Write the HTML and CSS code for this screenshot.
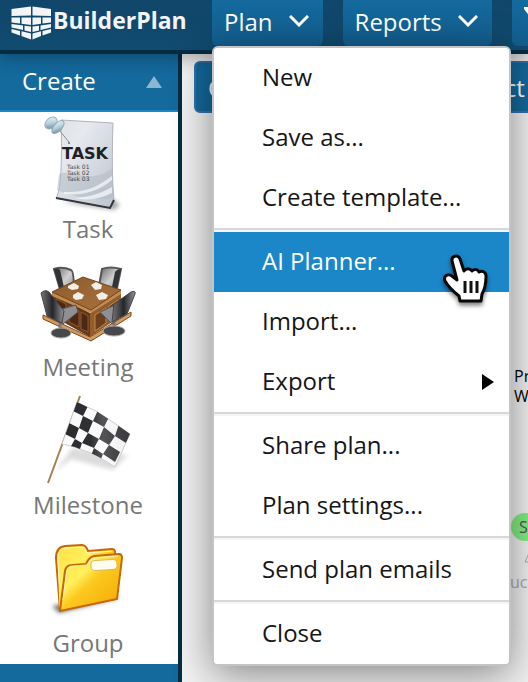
FILE: index.html
```html
<!DOCTYPE html>
<html lang="en">
<head>
  <meta charset="UTF-8">
  <meta name="viewport" content="width=device-width, initial-scale=1.0">
  <title>BuilderPlan</title>
  <link rel="stylesheet" href="styles.css">
</head>
<body>

  <header class="topbar">
    <a href="#" class="logo">
      <svg width="42" height="34" viewBox="0 0 42 34" fill="#f2f4f6" aria-hidden="true">
        <path d="M.5 3L20 .5V9.500L.5 10zM21.500.5L40 3v7l-18.500-.5z"/>
        <path d="M.5 11.500H9v6L.5 16.500zM10.500 11.500H20V19l-9.500-1.300zM21.500 11.500H30v6.200L21.500 19zM31.500 11.500H40v5l-8.500 1z"/>
        <path d="M.5 18L12 19.500v4.500L.5 21.500zM13.500 19.700L20 20.500V26l-6.500-1.600zM21.500 20.500L28 19.700v4.700L21.500 26zM29.500 19.500L40 18v3.500L29.500 24z"/>
        <path d="M.5 23L9 25v4.500L.5 26.500zM10.500 25.300L20 27.500V33.500l-9.500-3.500zM21.500 27.500L30 25.300V30l-8.500 3.500zM31.500 25L40 23v3.500l-8.500 3z"/>
      </svg>
      <span>BuilderPlan</span>
    </a>
    <nav class="menubar">
      <div class="menu-wrap">
        <button class="menu-btn" aria-expanded="true">Plan
          <svg class="chevron" viewBox="0 0 20 12"><path d="M1 1l9 9 9-9"/></svg>
        </button>
        <div class="dropdown" role="menu">
          <div class="menu-group">
            <button role="menuitem">New</button>
            <button role="menuitem">Save as...</button>
            <button role="menuitem">Create template...</button>
          </div>
          <div class="menu-group">
            <button role="menuitem" class="active">AI Planner...</button>
            <button role="menuitem">Import...</button>
            <button role="menuitem">Export
              <svg class="submenu-arrow" viewBox="0 0 12 16"><path d="M0 0l12 8-12 8z"/></svg>
            </button>
          </div>
          <div class="menu-group">
            <button role="menuitem">Share plan...</button>
            <button role="menuitem">Plan settings...</button>
          </div>
          <div class="menu-group">
            <button role="menuitem">Send plan emails</button>
          </div>
          <div class="menu-group">
            <button role="menuitem">Close</button>
          </div>
          <svg class="pointer" width="48" height="54" viewBox="0 0 48 54" aria-hidden="true">
            <path d="M9 7c-1-5 6-7 8-2l4 12c2-3 6-3 8 0 2-2 6-2 7 1 3-2 7 0 7 4 0 8-1 13-4 18l-1 7H17l-1-5C11 38 6 34 2 27c-2-5 3-8 7-5l5 4z" fill="#fff" stroke="#080808" stroke-width="3" stroke-linejoin="round"/>
            <path d="M22 27v12M28 27v12M34 27v12" stroke="#111" stroke-width="3"/>
          </svg>
        </div>
      </div>
      <button class="menu-btn">Reports
        <svg class="chevron" viewBox="0 0 20 12"><path d="M1 1l9 9 9-9"/></svg>
      </button>
      <button class="menu-btn" aria-label="Filter">
        <svg width="26" height="28" viewBox="0 0 26 28" fill="#fff"><path d="M0 0h26v3L16 15v13l-6-4V15L0 2z"/></svg>
      </button>
    </nav>
  </header>

  <div class="workspace">
    <aside class="sidebar">
      <button class="panel-title">Create
        <svg width="16" height="12" viewBox="0 0 16 12"><path d="M8 0l8 12H0z" fill="#8db6d1"/></svg>
      </button>
      <div class="palette">
        <button class="tool">
          <svg width="96" height="104" viewBox="0 0 96 104">
            <defs>
              <linearGradient id="paper" x1="0" y1="0" x2="1" y2="1">
                <stop offset="0" stop-color="#dfe3e8"/>
                <stop offset=".3" stop-color="#e6e9ee"/>
                <stop offset="1" stop-color="#bcc4ce"/>
              </linearGradient>
              <linearGradient id="pin" x1="0" y1="0" x2="1" y2="1">
                <stop offset="0" stop-color="#eef7fb"/>
                <stop offset=".5" stop-color="#b9d1dc"/>
                <stop offset="1" stop-color="#5a7c90"/>
              </linearGradient>
              <filter id="soft" x="-20%" y="-60%" width="140%" height="220%"><feGaussianBlur stdDeviation="2"/></filter>
            </defs>
            <path d="M22 90l52 8 6-5-7-6z" fill="#aaa" filter="url(#soft)"/>
            <path d="M21 8l52 3c-1 30-1 58 1 76l-4 9-54-10c6-8 6-48 5-78z" fill="url(#paper)" stroke="#b0b5bb"/>
            <path d="M19 62c13-6 30 12 54-6v30c-14 4-42-2-56-8z" fill="#aeb8c4" opacity=".5"/>
            <path d="M24 80c20 1 34-5 48-16v4C58 80 40 84 24 82zM34 86c18-1 29-6 38-11v6c-12 6-25 8-38 5z" fill="#fff" opacity=".65"/>
            <path d="M16 86l54 10 4-8" fill="none" stroke="#33373c" stroke-width="2"/>
            <path d="M19 18l10 12" stroke="#8d8d8d"/><circle cx="29" cy="31" r="1" fill="#765"/>
            <path d="M8 10l6-4 8 9-6 5-7-4z" fill="url(#pin)"/>
            <ellipse cx="11" cy="11" rx="5" ry="7" transform="rotate(48 11 11)" fill="url(#pin)" stroke="#9db4c0"/>
            <ellipse cx="18" cy="15" rx="4" ry="8" transform="rotate(42 18 15)" fill="url(#pin)" stroke="#8fa8b5"/>
            <text x="22" y="47" class="paper-title">TASK</text>
            <g class="paper-lines"><text x="27" y="57">Task 01</text><text x="27" y="63">Task 02</text><text x="27" y="69">Task 03</text></g>
          </svg>
          <span>Task</span>
        </button>
        <button class="tool">
          <svg width="96" height="104" viewBox="0 0 96 104">
            <defs>
              <linearGradient id="seat" x1="0" y1="0" x2="1" y2="0">
                <stop offset="0" stop-color="#777"/>
                <stop offset=".5" stop-color="#26262a"/>
                <stop offset="1" stop-color="#929297"/>
              </linearGradient>
              <linearGradient id="back" x1="0" y1="0" x2="1" y2="1">
                <stop offset="0" stop-color="#666"/>
                <stop offset=".5" stop-color="#d0d0d2"/>
                <stop offset="1" stop-color="#77777b"/>
              </linearGradient>
              <linearGradient id="wood" x1="0" y1="0" x2="1" y2="1">
                <stop offset="0" stop-color="#8d5a2c"/>
                <stop offset="1" stop-color="#a9733f"/>
              </linearGradient>
            </defs>
            <path d="M14 19q8-3 17 1 3 1 3 22l-12 4z" fill="url(#back)" stroke="#55555a" stroke-width="2"/>
            <path d="M14 19q4-1 6 1l6 26-5-2z" fill="#333337"/>
            <path d="M62 19q8-3 19 0l-5 24-17-7z" fill="url(#back)" stroke="#55555a" stroke-width="2"/>
            <path d="M81 19q-4 0-6 3l-4 20 5 1z" fill="#333337"/>
            <path d="M3 65l47 22 41-25v4L51 91 3 69z" fill="#d19b61" stroke="#7d491b"/>
            <path d="M12 43l38 20v24L14 67z" fill="#64391a"/>
            <path d="M50 63l31-20v23L50 87z" fill="#925c2d"/>
            <path d="M16 49l10 5v18l-10-6zM29 56l10 5v16l-10-5zM41 62l7 4v16l-7-3z" fill="#4c2812" stroke="#8c5a34"/>
            <path d="M55 65l11-7v15l-11 8zM69 56l9-6v15l-9 6z" fill="#6d3e1b" stroke="#bf894d"/>
            <path d="M12 43l31-14 38 11v4L51 63 12 46z" fill="#c28b52"/>
            <path d="M12 42l31-15 38 13-30 20z" fill="url(#wood)" stroke="#714419"/>
            <path d="M28 36l6-3 5 3-1 3-6 1-4-2zM51 35l5-3 6 3-1 4-6 1zM33 45l5-3 6 3-2 4-6 1-3-2zM56 45l6-3 6 3-2 4-7 1z" fill="#f3efe7"/>
            <path d="M20 65v18" stroke="#77777b" stroke-width="3"/>
            <ellipse cx="21" cy="83" rx="10" ry="5" fill="#48484a" stroke="#aaa"/>
            <path d="M18 60l18-5 2 7-15 12-15-8z" fill="#8f8f94" stroke="#555"/>
            <path d="M1 43q4-4 8-1l15 19-2 12-15-7z" fill="url(#seat)" stroke="#444"/>
            <path d="M74 67v15" stroke="#77777b" stroke-width="3"/>
            <ellipse cx="74" cy="81" rx="11" ry="5" fill="#48484a" stroke="#aaa"/>
            <path d="M60 62l13-6 13 6-14 12z" fill="#8f8f94" stroke="#555"/>
            <path d="M91 42q5-2 4 2l-8 20-15 8 2-18z" fill="url(#seat)" stroke="#444"/>
          </svg>
          <span>Meeting</span>
        </button>
        <button class="tool">
          <svg width="96" height="104" viewBox="0 -2 96 104">
            <defs>
              <linearGradient id="cloth" x1="0" y1="0" x2="1" y2="0">
                <stop offset="0" stop-color="#fff" stop-opacity="0"/>
                <stop offset=".42" stop-color="#fff" stop-opacity=".03"/>
                <stop offset=".6" stop-color="#fff" stop-opacity=".2"/>
                <stop offset="1" stop-color="#aaa" stop-opacity=".12"/>
              </linearGradient>
              <clipPath id="flag"><path d="M37 12q10 5 19 9 13 8 34 23l-15 33q-21-14-30-16-11-5-23-7z"/></clipPath>
            </defs>
            <path d="M15 82l17-24 56 7-15 15-42-11z" fill="#dcdcdc" filter="url(#soft)"/>
            <path d="M8 93L40 6" stroke="#a08358" stroke-width="2"/>
            <path d="M37 12q10 5 19 9 13 8 34 23l-15 33q-21-14-30-16-11-5-23-7z" fill="#fafafa" stroke="#ccc"/>
            <g fill="#292a2d" clip-path="url(#flag)">
              <path d="M37 10l11 6-5 10-10-5zM58 20l11 7-5 10-11-6zM79 34l12 8-5 11-11-7z"/>
              <path d="M43 26l10 5-5 12-9-5zM64 37l11 9-6 9-10-6z"/>
              <path d="M33 21l-7 15 8 3 5-15zM32 35l7 3 9 5-6 10-11-5zM53 43l6 6 10 6-6 10-10-7-5-3z" fill="none"/>
              <path d="M29 33l10 5-4 11-10-5zM48 43l11 6-5 9-12-5zM69 55l11 7-5 10-12-8z"/>
              <path d="M35 49l7 4-3 9-9-4zM54 58l9 6-4 10-9-6z"/>
            </g>
            <path d="M37 12q10 5 19 9 13 8 34 23l-15 33q-21-14-30-16-11-5-23-7z" fill="url(#cloth)"/>
          </svg>
          <span>Milestone</span>
        </button>
        <button class="tool">
          <svg width="96" height="104" viewBox="0 -6 96 104">
            <defs>
              <linearGradient id="folder" x1="0" y1="0" x2="1" y2="1">
                <stop offset="0" stop-color="#ffe13f"/>
                <stop offset=".35" stop-color="#fff05e"/>
                <stop offset=".5" stop-color="#fcc91f"/>
                <stop offset="1" stop-color="#f4a600"/>
              </linearGradient>
            </defs>
            <path d="M12 74l62-12 5 4-60 15z" fill="#777" filter="url(#soft)"/>
            <path d="M20 78l-4-52q0-11 9-12l17-1q4 0 6 6l24-2q4 0 3 6v44z" fill="url(#folder)" stroke="#c66900" stroke-width="2"/>
            <path d="M20 75l-2-48q0-10 8-11l15-1q4 0 6 6l25-2" fill="none" stroke="#fff3c5"/>
            <path d="M20 79l5-40q1-6 7-6l14-1q3-7 8-8l25-2q3 0 3 4l-5 41z" fill="url(#folder)" stroke="#c66900" stroke-width="2"/>
            <path d="M23 68l4-29q1-5 6-5l14-1q4-7 8-7l23-2" fill="none" stroke="#fff2b8"/>
            <rect x="51" y="28" width="26" height="10" rx="4" fill="#fffdf0" stroke="#deb756" transform="rotate(-3 64 33)"/>
          </svg>
          <span>Group</span>
        </button>
      </div>
      <button class="panel-title">Links
        <svg width="16" height="12" viewBox="0 0 16 12"><path d="M8 0l8 12H0z" fill="#8db6d1"/></svg>
      </button>
    </aside>

    <main class="canvas">
      <div class="toolbar">
        <button>Collapse</button>
        <button>Select</button>
      </div>
      <div class="node-title">Project<br>Work</div>
      <div class="node-start">S</div>
      <svg class="node-mark" width="20" height="18" viewBox="0 0 20 18"><path d="M1 12L5 3V0M1 12h16" fill="none" stroke="#aaa"/></svg>
      <div class="node-caption">uct</div>
    </main>
  </div>

</body>
</html>
```
FILE: styles.css
```css
* {
  box-sizing: border-box;
}

body {
  margin: 0;
  height: 100vh;
  display: flex;
  flex-direction: column;
  overflow: hidden;
  font-family: "Open Sans", "Noto Sans", sans-serif;
  font-size: 24px;
  background: #f2f2f2;
}

button {
  border: 0;
  margin: 0;
  font: inherit;
  cursor: pointer;
}

.topbar {
  display: flex;
  flex: none;
  height: 54px;
  background: linear-gradient(#10466a, #104b70);
  border-bottom: 4px solid #062c42;
  position: relative;
  z-index: 5;
  box-shadow: 0 4px 16px rgba(0, 0, 0, 0.3);
}

.logo {
  display: flex;
  flex: none;
  width: 212px;
  padding: 6px 0 0 11px;
  color: #f2f4f6;
  font-size: 23px;
  font-weight: bold;
  line-height: 28px;
  text-decoration: none;
}

.logo svg {
  flex: none;
}

.menubar {
  display: flex;
  gap: 20px;
}

.menu-wrap {
  position: relative;
}

.menu-btn {
  display: flex;
  align-items: center;
  gap: 16px;
  height: 46px;
  padding: 0 14px 4px 12px;
  border-radius: 0 0 6px 6px;
  background: linear-gradient(#14699d, #135f90);
  color: #fff;
}

.chevron {
  width: 20px;
  height: 12px;
  fill: none;
  stroke: #fff;
  stroke-width: 3;
}

.dropdown {
  position: absolute;
  top: 46px;
  left: 0;
  width: 299px;
  background: #fff;
  border: 2px solid #c4c4c4;
  border-radius: 6px;
  box-shadow: 0 8px 40px rgba(0, 0, 0, 0.45);
}

.menu-group + .menu-group {
  border-top: 2px solid #d8d8d8;
  padding-top: 2px;
  background: #f5f5f5;
}

.menu-group:last-of-type {
  border-radius: 0 0 4px 4px;
}

.menu-group button {
  display: flex;
  align-items: center;
  justify-content: space-between;
  width: 100%;
  height: 60px;
  padding: 0 15px 4px 48px;
  background: #fff;
  color: #161616;
}

.menu-group:first-child button:first-child {
  border-radius: 4px 4px 0 0;
}

.menu-group:last-of-type button {
  border-radius: 0 0 4px 4px;
}

.menu-group button.active {
  background: #1b87c9;
  color: #fff;
}

.submenu-arrow {
  width: 12px;
  height: 16px;
  margin-top: 4px;
}

.pointer {
  position: absolute;
  top: 206px;
  right: 18px;
  filter: drop-shadow(0 3px 2px rgba(0, 0, 0, 0.5));
}

.workspace {
  display: flex;
  flex: 1;
  min-height: 0;
}

.sidebar {
  flex: none;
  width: 182px;
  background: #fff;
  border-right: 4px solid #062c42;
  overflow: hidden;
}

.panel-title {
  display: flex;
  align-items: center;
  justify-content: space-between;
  width: 100%;
  height: 58px;
  padding: 0 16px 4px 22px;
  background: #14699d;
  border-bottom: 2px solid #1b87c9;
  color: #fff;
}

.panel-title svg {
  margin-top: 4px;
}

.tool {
  display: flex;
  flex-direction: column;
  align-items: center;
  width: 100%;
  height: 138px;
  padding: 0 2px 0 0;
  background: #fff;
  color: #777;
  line-height: 26px;
}

.tool svg {
  flex: none;
}

.paper-title {
  font: bold 16px "DejaVu Sans", sans-serif;
  fill: #202124;
}

.paper-lines {
  font: 6px "DejaVu Sans", sans-serif;
  fill: #444;
}

.canvas {
  position: relative;
  flex: 1;
  min-width: 0;
  padding: 7px 12px;
  background: #f2f2f2;
  overflow: hidden;
}

.toolbar {
  display: flex;
  gap: 128px;
}

.toolbar button {
  height: 52px;
  padding: 0 12px;
  background: #14699d;
  border: 2px solid #3272aa;
  border-radius: 6px;
  color: #fff;
}

/* plan nodes */
.node-title,
.node-start,
.node-mark,
.node-caption {
  position: absolute;
  left: 332px;
  font-size: 16px;
  line-height: 20px;
}

.node-title {
  top: 312px;
}

.node-start {
  top: 459px;
  left: 329px;
  width: 28px;
  height: 28px;
  border-radius: 50%;
  background: #82f082;
  color: #555;
  padding-left: 8px;
  line-height: 28px;
}

.node-mark {
  top: 496px;
  left: 342px;
}

.node-caption {
  top: 518px;
  left: 328px;
  color: #aaa;
}
```
